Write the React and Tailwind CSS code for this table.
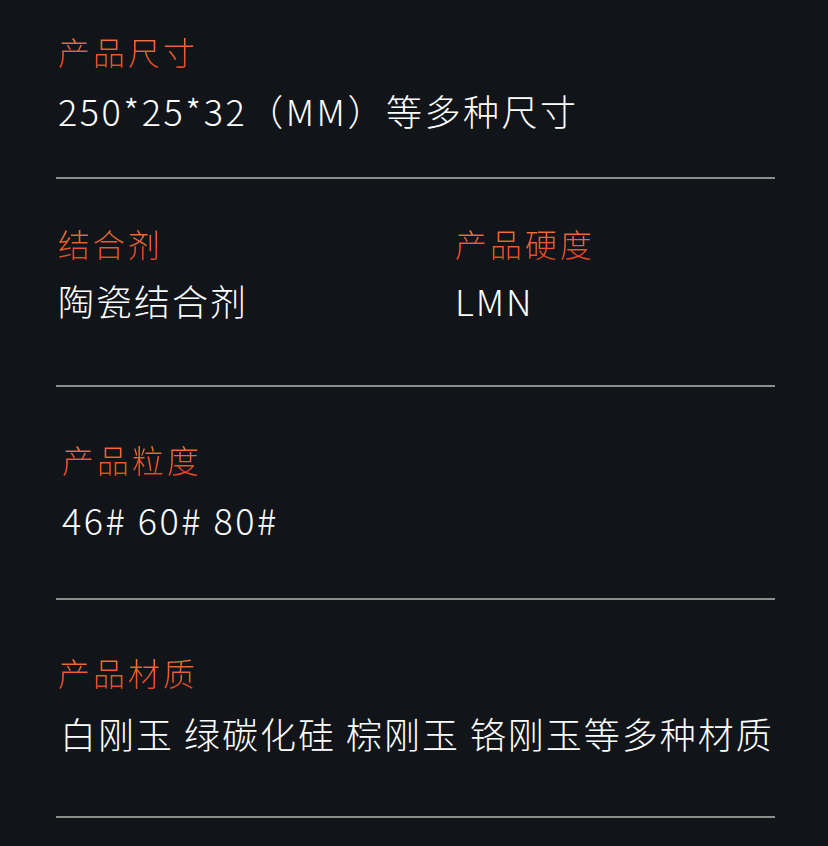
const font = { fontFamily: '"Noto Sans CJK SC", "Noto Sans", sans-serif' };

function Label({ children }) {
  return (
    <div className="bg-gradient-to-b from-[#f6793d] to-[#e7401e] bg-clip-text pl-0.5 text-[32px] font-light leading-[40px] tracking-[3px] text-transparent">
      {children}
    </div>
  );
}

function Value({ children, className = "" }) {
  return (
    <div className={`pl-0.5 text-[36px] font-light leading-[44px] text-white ${className}`}>
      {children}
    </div>
  );
}

export default function App() {
  return (
    <div className="min-h-[846px] w-full bg-[#11151a]" style={font}>
      <div className="mx-[56px] w-[719px]">
        <section className="border-b-2 border-[#8c8c8c] pb-[45px] pt-[31px]">
          <Label>产品尺寸</Label>
          <Value className="mt-[17px] tracking-[2.5px]">250*25*32（MM）等多种尺寸</Value>
        </section>

        <section className="grid grid-cols-[397px_1fr] border-b-2 border-[#8c8c8c] pb-[63px] pt-[44px]">
          <div>
            <Label>结合剂</Label>
            <Value className="mt-[15px] tracking-[2px]">陶瓷结合剂</Value>
          </div>
          <div>
            <Label>产品硬度</Label>
            <Value className="mt-[15px] tracking-[2px]">LMN</Value>
          </div>
        </section>

        <section className="border-b-2 border-[#8c8c8c] pb-[57px] pl-1 pt-[52px]">
          <Label>产品粒度</Label>
          <Value className="mt-[18px] tracking-[2.5px]">46# 60# 80#</Value>
        </section>

        <section className="border-b-2 border-[#8c8c8c] pb-[61px] pt-[52px]">
          <Label>产品材质</Label>
          <Value className="mt-[19px] pl-1 tracking-[2px]">白刚玉 绿碳化硅 棕刚玉 铬刚玉等多种材质</Value>
        </section>
      </div>
    </div>
  );
}
